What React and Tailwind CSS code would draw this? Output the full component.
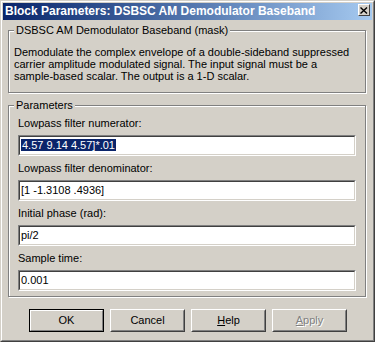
import React from 'react';

// Win2000-style "Block Parameters" dialog

const FONT = { fontFamily: '"Liberation Sans", Arial, sans-serif' };

const GroupBox = ({ title, className = '', children }) => (
  <div
    className={`relative border border-[#808080] shadow-[inset_1px_1px_0_#fff,1px_1px_0_#fff] ${className}`}
  >
    <span className="absolute left-[5px] top-[-7px] bg-[#d4d0c8] px-[2px] leading-[12px]">
      {title}
    </span>
    {children}
  </div>
);

const EditBox = ({ children }) => (
  <div className="h-[21px] border border-t-[#808080] border-l-[#808080] border-b-white border-r-white">
    <div className="h-full border border-t-[#404040] border-l-[#404040] border-b-[#d4d0c8] border-r-[#d4d0c8] bg-white pl-[1px] leading-[17px] whitespace-nowrap overflow-hidden">
      {children}
    </div>
  </div>
);

const Field = ({ label, children }) => (
  <div>
    <div className="h-[24px] leading-[24px]">{label}</div>
    <EditBox>{children}</EditBox>
  </div>
);

const Button = ({ children, isDefault, disabled }) => {
  if (isDefault) {
    return (
      <div className="w-[75px] h-[23px] border border-black">
        <div className="h-full border border-t-white border-l-white border-b-[#808080] border-r-[#808080] flex items-center justify-center">
          {children}
        </div>
      </div>
    );
  }
  return (
    <div className="w-[75px] h-[23px] border border-t-white border-l-white border-b-[#404040] border-r-[#404040]">
      <div
        className={`h-full border border-t-[#d4d0c8] border-l-[#d4d0c8] border-b-[#808080] border-r-[#808080] flex items-center justify-center ${
          disabled ? 'text-[#808080] [text-shadow:1px_1px_0_#fff]' : ''
        }`}
      >
        {children}
      </div>
    </div>
  );
};

export default function App() {
  return (
    <div
      style={FONT}
      className="w-[375px] h-[342px] text-[11px] text-black border border-t-[#d4d0c8] border-l-[#d4d0c8] border-b-[#404040] border-r-[#404040] bg-[#d4d0c8]"
    >
      <div className="h-full border border-t-white border-l-white border-b-[#808080] border-r-[#808080] p-[1px] flex flex-col">
        {/* Title bar */}
        <div className="h-[17px] flex items-start justify-between bg-gradient-to-r from-[#0a246a] to-[#a6caf0] pl-[2px] pr-[2px]">
          <span className="text-white font-bold text-[12px] leading-[17px]">
            Block Parameters: DSBSC AM Demodulator Baseband
          </span>
          <div className="mt-[1px] w-[12px] h-[12px] border border-t-white border-l-white border-b-[#404040] border-r-[#404040] bg-[#d4d0c8] flex items-center justify-center">
            <svg width="8" height="7" viewBox="0 0 8 7">
              <path d="M0.5 0.5 L7 6.5 M7 0.5 L0.5 6.5" stroke="#000" strokeWidth="1.4" />
            </svg>
          </div>
        </div>

        {/* Description group */}
        <GroupBox
          title="DSBSC AM Demodulator Baseband (mask)"
          className="mt-[10px] ml-[5px] w-[358px] h-[63px] pl-[5px] pt-[15px]"
        >
          <p className="leading-[12px]">
            Demodulate the complex envelope of a double-sideband suppressed
            <br />
            carrier amplitude modulated signal. The input signal must be a
            <br />
            sample-based scalar. The output is a 1-D scalar.
          </p>
        </GroupBox>

        {/* Parameters group */}
        <GroupBox
          title="Parameters"
          className="mt-[12px] ml-[5px] w-[358px] h-[192px] px-[9px] pt-[5px]"
        >
          <div className="flex flex-col">
            <Field label="Lowpass filter numerator:">
              <span className="bg-[#0a246a] text-white px-[1px]">4.57 9.14 4.57]*.01</span>
            </Field>
            <Field label="Lowpass filter denominator:">[1 -1.3108 .4936]</Field>
            <Field label="Initial phase (rad):">pi/2</Field>
            <Field label="Sample time:">0.001</Field>
          </div>
        </GroupBox>

        {/* Buttons */}
        <div className="mt-[12px] ml-[26px] flex gap-[6px]">
          <Button isDefault>OK</Button>
          <Button>Cancel</Button>
          <Button>
            <span>
              <span className="underline">H</span>elp
            </span>
          </Button>
          <Button disabled>
            <span>
              <span className="underline">A</span>pply
            </span>
          </Button>
        </div>
      </div>
    </div>
  );
}
